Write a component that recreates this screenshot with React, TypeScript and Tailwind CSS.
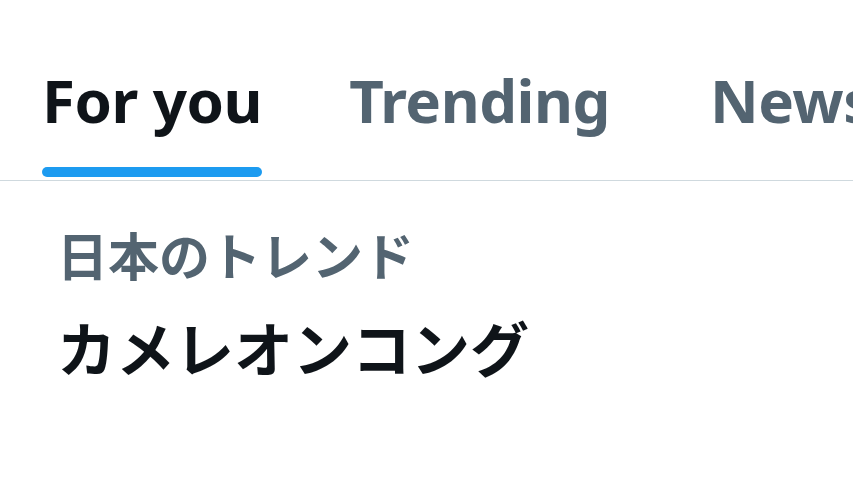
import React from "react";

const tabs = [
  { id: "foryou", label: "For you", ml: "ml-[42px]" },
  { id: "trending", label: "Trending", ml: "ml-[87px]" },
  { id: "news", label: "News", ml: "ml-[100px]" },
];

export default function App() {
  const activeId = "foryou";

  return (
    <div className="w-[853px] h-[480px] overflow-hidden bg-white font-['Noto_Sans','Noto_Sans_CJK_JP',sans-serif]">
      {/* タブ */}
      <nav className="flex items-end h-[181px] border-b border-[#cfd9de] whitespace-nowrap">
        {tabs.map((tab) => (
          <div key={tab.id} className={`${tab.ml} flex flex-col shrink-0`}>
            <span
              className={`text-[60px] leading-none font-bold tracking-[-0.5px] ${
                activeId === tab.id ? "text-[#0f1419]" : "text-[#536471]"
              }`}
            >
              {tab.label}
            </span>
            <span className={`mt-[37px] mb-[3px] h-[10px] rounded-full ${activeId === tab.id ? "bg-[#1d9bf0]" : "bg-transparent"}`} />
          </div>
        ))}
      </nav>

      {/* トレンド */}
      <div className="pl-[57px] pt-[50px]">
        <p className="text-[51px] leading-none text-[#536471] font-bold">日本のトレンド</p>
        <p className="mt-[38px] text-[59px] leading-none text-[#0f1419] font-bold">カメレオンコング</p>
      </div>
    </div>
  );
}
